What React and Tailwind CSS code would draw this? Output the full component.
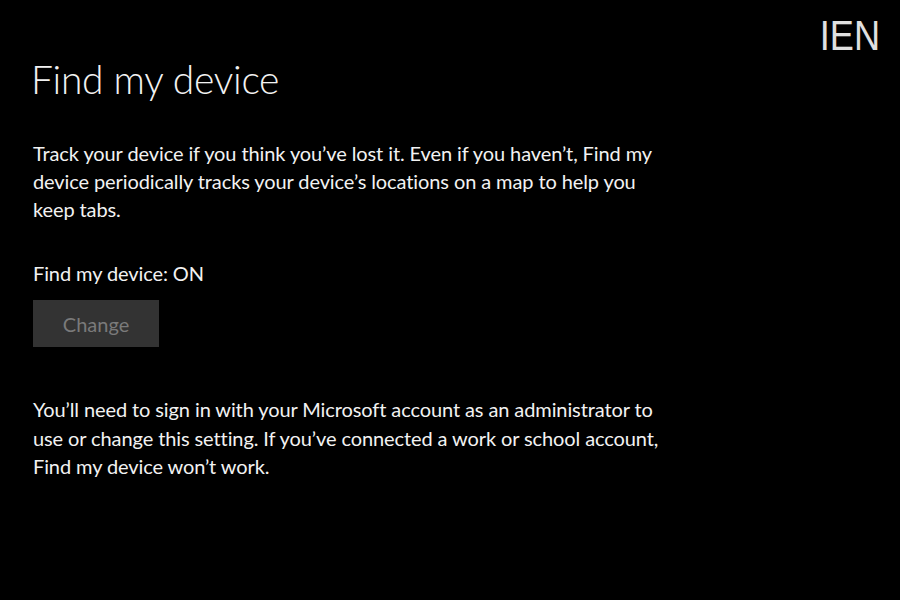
import React from "react";

const FindMyDevice = () => {
  return (
    <div className="relative w-[900px] h-[600px] bg-black text-[#f2f2f2] font-['Lato','Open_Sans',sans-serif] overflow-hidden">
      {/* watermark */}
      <div className="absolute top-[15px] right-[20px] origin-right scale-x-[0.86] text-[42px] leading-none text-[#e0e0e0] font-['Liberation_Sans',sans-serif]">
        IEN
      </div>

      <div className="pl-[33px] pt-[55px]">
        <h1 className="-ml-[2px] text-[39px] leading-[48px] font-light tracking-[-0.3px]">Find my device</h1>

        <p className="mt-[36px] text-[20px] leading-[28px] tracking-[-0.1px]">
          Track your device if you think you’ve lost it. Even if you haven’t, Find my
          <br />
          device periodically tracks your device’s locations on a map to help you
          <br />
          keep tabs.
        </p>

        <p className="mt-[36px] text-[20px] leading-[28px] tracking-[-0.1px]">Find my device: ON</p>

        <button className="mt-[13px] w-[126px] h-[47px] bg-[#333333] text-[#7a7a7a] text-[20px]">
          Change
        </button>

        <p className="mt-[48px] text-[20px] leading-[28.5px] tracking-[-0.1px]">
          You’ll need to sign in with your Microsoft account as an administrator to
          <br />
          use or change this setting. If you’ve connected a work or school account,
          <br />
          Find my device won’t work.
        </p>
      </div>
    </div>
  );
};

export default function App() {
  return <FindMyDevice />;
}
